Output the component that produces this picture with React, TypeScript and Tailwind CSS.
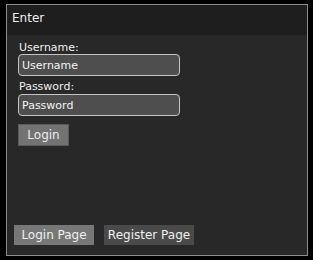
import React from "react";

export default function App() {
  return (
    <div className="min-h-[260px] w-[313px] bg-black pt-1 pl-[6px]" style={{ fontFamily: '"DejaVu Sans", Verdana, sans-serif' }}>
      <div className="flex h-[252px] w-[302px] flex-col border border-[#8c8c8c] bg-[#282828]">
        <div className="h-[30px] bg-[#1e1e1e] pl-[5px] pt-[6px] text-[12px] leading-[14px] text-[#f0f0f0]">
          Enter
        </div>
        <div className="flex flex-col pl-[11px] pt-[6px]">
          <label className="ml-px text-[11px] leading-[13px] text-[#f0f0f0]">Username:</label>
          <input
            type="text"
            placeholder="Username"
            className="h-[22px] w-[162px] rounded-[4px] border border-[#c4c4c4] bg-[#4e4e4e] pl-[3px] text-[11px] text-white outline-none placeholder:text-[#f4f4f4]"
          />
          <label className="ml-px mt-[4px] text-[11px] leading-[14px] text-[#f0f0f0]">Password:</label>
          <input
            type="password"
            placeholder="Password"
            className="h-[22px] w-[162px] rounded-[4px] border border-[#c4c4c4] bg-[#4e4e4e] pl-[3px] text-[11px] text-white outline-none placeholder:text-[#f4f4f4]"
          />
          <button className="mt-[8px] h-[22px] w-[51px] border border-[#5a5a5a] bg-[#737373] text-[12px] text-[#ececec]">
            Login
          </button>
        </div>
        <div className="mt-auto flex gap-[10px] pb-[10px] pl-[7px]">
          <button className="h-[20px] w-[80px] bg-[#777777] text-[12px] text-[#f0f0f0]">Login Page</button>
          <button className="h-[20px] w-[90px] bg-[#4a4a4a] text-[12px] text-[#f0f0f0]">Register Page</button>
        </div>
      </div>
    </div>
  );
}
